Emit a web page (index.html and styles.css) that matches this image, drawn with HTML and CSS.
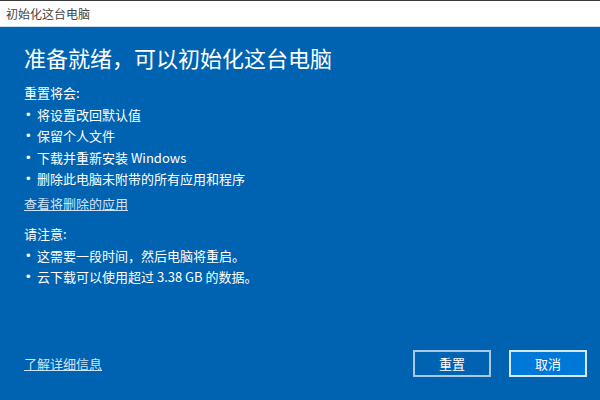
FILE: index.html
```html
<!DOCTYPE html>
<html lang="zh-CN">
  <head>
    <meta charset="UTF-8" />
    <meta name="viewport" content="width=device-width, initial-scale=1.0" />
    <title>初始化这台电脑</title>
    <link rel="stylesheet" href="styles.css">
  </head>
  <body>
    <div class="window">
      <div class="title-bar">初始化这台电脑</div>

      <div class="dialog">
        <div class="content">
          <h1>准备就绪，可以初始化这台电脑</h1>

          <p class="section-label">重置将会:</p>
          <ul class="list">
            <li>将设置改回默认值</li>
            <li>保留个人文件</li>
            <li>下载并重新安装 Windows</li>
            <li>删除此电脑未附带的所有应用和程序</li>
          </ul>
          <a class="link" href="#">查看将删除的应用</a>

          <p class="section-label notice">请注意:</p>
          <ul class="list">
            <li>这需要一段时间，然后电脑将重启。</li>
            <li>云下载可以使用超过 3.38 GB 的数据。</li>
          </ul>
        </div>

        <!-- 底部按钮 -->
        <div class="footer">
          <a class="link" href="#">了解详细信息</a>
          <div class="buttons">
            <button class="btn">重置</button>
            <button class="btn btn-primary">取消</button>
          </div>
        </div>
      </div>
    </div>
  </body>
</html>
```

FILE: styles.css
```css
body {
  margin: 0;
  font-family: "Noto Sans CJK SC", "Liberation Sans", sans-serif;
  background-color: #0063b1;
}

.window {
  display: flex;
  flex-direction: column;
  width: 600px;
  height: 400px;
  overflow: hidden;
}

/* 标题栏 */
.title-bar {
  height: 25px;
  line-height: 25px;
  padding-left: 6px;
  font-size: 12px;
  color: #444;
  background-color: #fff;
  border-top: 1px solid #3a3a3a;
  border-bottom: 1px solid #c7dcef;
}

.dialog {
  flex: 1;
  display: flex;
  flex-direction: column;
  background-color: #0063b1;
  color: #fff;
}

.content {
  padding: 15px 24px 0;
}

h1 {
  margin: 0 0 10px;
  font-size: 22px;
  font-weight: normal;
  line-height: 30px;
}

.section-label {
  margin: 0;
  font-size: 13px;
  line-height: 21.5px;
}

.notice {
  margin-top: 9px;
}

.list {
  margin: 0;
  padding: 0;
  list-style: none;
}

.list li {
  display: flex;
  font-size: 13px;
  line-height: 21.5px;
}

.list li::before {
  content: "•";
  width: 11px;
  padding-left: 2px;
  flex-shrink: 0;
  font-family: "Liberation Sans", sans-serif;
}

.link {
  display: inline-block;
  font-size: 13px;
  line-height: 21.5px;
  color: #cfe2f5;
  text-decoration: underline;
}

/* 底部按钮区域 */
.footer {
  margin-top: auto;
  display: flex;
  align-items: center;
  justify-content: space-between;
  padding: 0 13px 23px 24px;
}

.buttons {
  display: flex;
  gap: 18px;
}

.btn {
  width: 78px;
  height: 27px;
  padding: 0;
  font-family: inherit;
  font-size: 13px;
  color: #fff;
  background-color: #0063b1;
  border: 2px solid #a9c8e6;
  cursor: pointer;
}

.btn-primary {
  background-color: #0078d7;
  border-color: #d6e8f8;
}
```
